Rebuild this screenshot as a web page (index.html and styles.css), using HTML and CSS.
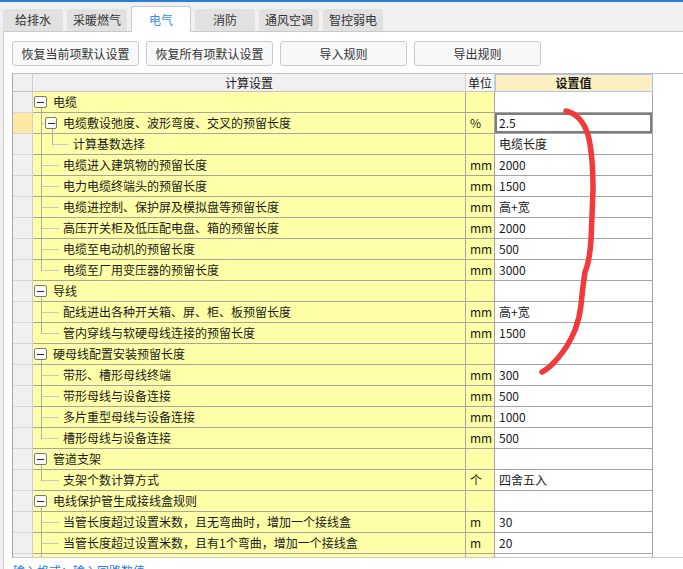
FILE: index.html
```html
<!DOCTYPE html>
<html lang="zh-CN">
<head>
<meta charset="utf-8">
<title>计算设置</title>
<link rel="stylesheet" href="styles.css">
</head>
<body>
<div class="topbar"></div>
<div class="tabs">
  <div class="tab">给排水</div>
  <div class="tab">采暖燃气</div>
  <div class="tab active">电气</div>
  <div class="tab">消防</div>
  <div class="tab">通风空调</div>
  <div class="tab">智控弱电</div>
</div>
<div class="panel">
  <div class="toolbar">
    <button class="btn">恢复当前项默认设置</button>
    <button class="btn">恢复所有项默认设置</button>
    <button class="btn">导入规则</button>
    <button class="btn">导出规则</button>
  </div>
  <div class="grid">
    <div class="row head"><div class="rh"></div><div class="name">计算设置</div><div class="unit">单位</div><div class="val">设置值</div></div>

    <div class="row"><div class="rh"></div><div class="name g1"><span class="box b1"></span><span class="txt x1">电缆</span></div><div class="unit"></div><div class="val"></div></div>
    <div class="row"><div class="rh sel"></div><div class="name g2"><span class="seg t"></span><span class="box b2"></span><span class="txt x2">电缆敷设弛度、波形弯度、交叉的预留长度</span></div><div class="unit">%</div><div class="val cur">2.5</div></div>
    <div class="row"><div class="rh"></div><div class="name"><span class="seg v"></span><span class="seg l w24"></span><span class="txt x3">计算基数选择</span></div><div class="unit"></div><div class="val">电缆长度</div></div>
    <div class="row"><div class="rh"></div><div class="name"><span class="seg t w26"></span><span class="txt x4">电缆进入建筑物的预留长度</span></div><div class="unit">mm</div><div class="val">2000</div></div>
    <div class="row"><div class="rh"></div><div class="name"><span class="seg t w26"></span><span class="txt x4">电力电缆终端头的预留长度</span></div><div class="unit">mm</div><div class="val">1500</div></div>
    <div class="row"><div class="rh"></div><div class="name"><span class="seg t w26"></span><span class="txt x4">电缆进控制、保护屏及模拟盘等预留长度</span></div><div class="unit">mm</div><div class="val">高+宽</div></div>
    <div class="row"><div class="rh"></div><div class="name"><span class="seg t w26"></span><span class="txt x4">高压开关柜及低压配电盘、箱的预留长度</span></div><div class="unit">mm</div><div class="val">2000</div></div>
    <div class="row"><div class="rh"></div><div class="name"><span class="seg t w26"></span><span class="txt x4">电缆至电动机的预留长度</span></div><div class="unit">mm</div><div class="val">500</div></div>
    <div class="row"><div class="rh"></div><div class="name"><span class="seg l w26"></span><span class="txt x4">电缆至厂用变压器的预留长度</span></div><div class="unit">mm</div><div class="val">3000</div></div>

    <div class="row"><div class="rh"></div><div class="name g1"><span class="box b1"></span><span class="txt x1">导线</span></div><div class="unit"></div><div class="val"></div></div>
    <div class="row"><div class="rh"></div><div class="name"><span class="seg t w26"></span><span class="txt x4">配线进出各种开关箱、屏、柜、板预留长度</span></div><div class="unit">mm</div><div class="val">高+宽</div></div>
    <div class="row"><div class="rh"></div><div class="name"><span class="seg l w26"></span><span class="txt x4">管内穿线与软硬母线连接的预留长度</span></div><div class="unit">mm</div><div class="val">1500</div></div>

    <div class="row"><div class="rh"></div><div class="name g1"><span class="box b1"></span><span class="txt x1">硬母线配置安装预留长度</span></div><div class="unit"></div><div class="val"></div></div>
    <div class="row"><div class="rh"></div><div class="name"><span class="seg t w26"></span><span class="txt x4">带形、槽形母线终端</span></div><div class="unit">mm</div><div class="val">300</div></div>
    <div class="row"><div class="rh"></div><div class="name"><span class="seg t w26"></span><span class="txt x4">带形母线与设备连接</span></div><div class="unit">mm</div><div class="val">500</div></div>
    <div class="row"><div class="rh"></div><div class="name"><span class="seg t w26"></span><span class="txt x4">多片重型母线与设备连接</span></div><div class="unit">mm</div><div class="val">1000</div></div>
    <div class="row"><div class="rh"></div><div class="name"><span class="seg l w26"></span><span class="txt x4">槽形母线与设备连接</span></div><div class="unit">mm</div><div class="val">500</div></div>

    <div class="row"><div class="rh"></div><div class="name g1"><span class="box b1"></span><span class="txt x1">管道支架</span></div><div class="unit"></div><div class="val"></div></div>
    <div class="row"><div class="rh"></div><div class="name"><span class="seg l w26"></span><span class="txt x4">支架个数计算方式</span></div><div class="unit">个</div><div class="val">四舍五入</div></div>

    <div class="row"><div class="rh"></div><div class="name g1"><span class="box b1"></span><span class="txt x1">电线保护管生成接线盒规则</span></div><div class="unit"></div><div class="val"></div></div>
    <div class="row"><div class="rh"></div><div class="name"><span class="seg t w26"></span><span class="txt x4">当管长度超过设置米数，且无弯曲时，增加一个接线盒</span></div><div class="unit">m</div><div class="val">30</div></div>
    <div class="row"><div class="rh"></div><div class="name"><span class="seg t w26"></span><span class="txt x4">当管长度超过设置米数，且有1个弯曲，增加一个接线盒</span></div><div class="unit">m</div><div class="val">20</div></div>
    <div class="row"><div class="rh"></div><div class="name"><span class="seg t w26"></span><span class="txt x4">当管长度超过设置米数，且有2个弯曲，增加一个接线盒</span></div><div class="unit">m</div><div class="val">15</div></div>
  </div>
  <div class="hint">输入格式：输入回路数值</div>
</div>
<svg class="scribble" width="683" height="569" viewBox="0 0 683 569">
  <path d="M566,111 C576,113 584,122 588,135 C592,150 593,170 593,190 L591,240 C590,255 588,265 585,272 C583,285 582,295 581,305 C580,315 578,322 575,330 C570,342 565,350 558,358 C553,364 548,369 542,372" fill="none" stroke="#f23a3a" stroke-width="5.5" stroke-linecap="round" stroke-linejoin="round"/>
</svg>
</body>
</html>
```

FILE: styles.css
```css
* { box-sizing: border-box; }

body {
  margin: 0;
  width: 683px;
  height: 569px;
  overflow: hidden;
  position: relative;
  background: #f0f0f0;
  font-family: "Noto Sans CJK SC", "Noto Sans", sans-serif;
  font-size: 12px;
  color: #1a1a1a;
}

.topbar {
  height: 2px;
  background: #2c7cd4;
}

.tabs {
  display: flex;
  align-items: flex-end;
  gap: 4px;
  height: 29px;
  padding-left: 3px;
}

.tab {
  width: 60px;
  height: 22px;
  background: #e1e1e1;
  border-radius: 3px 3px 0 0;
  display: flex;
  align-items: center;
  justify-content: center;
  color: #333;
  line-height: 1;
}

.tab.active {
  height: 26px;
  background: #fff;
  border: 1px solid #c9c9c9;
  border-bottom: none;
  color: #3b8de6;
  margin-bottom: -1px;
  position: relative;
}

.panel {
  margin-left: 3px;
  height: 538px;
  overflow: hidden;
  background: #fff;
  border-top: 1px solid #c9c9c9;
  border-left: 1px solid #c9c9c9;
  padding-top: 9px;
}

.toolbar {
  display: flex;
  gap: 7px;
  margin-left: 8px;
}

.btn {
  width: 127px;
  height: 25px;
  padding: 0;
  border: 1px solid #c5cbd5;
  border-radius: 3px;
  background: #f8f8f8;
  font: inherit;
  color: #333;
}

.grid {
  margin: 7px 0 0 8px;
  height: 485px;
  overflow: hidden;
  background: #fff;
  border-top: 1px solid #bdbdbd;
  border-left: 1px solid #a9a9a9;
  border-bottom: 1px solid #cacaca;
}

.row {
  display: flex;
  height: 21px;
}

.row > div {
  flex: none;
  display: flex;
  align-items: center;
  border-bottom: 1px solid #a5a5a5;
  line-height: 16px;
  white-space: nowrap;
}

.row > .rh {
  width: 20px;
  background: #f0f0f0;
  border-right: 1px solid #c9ced8;
  border-bottom-color: #d3d8e0;
}

.row > .rh.sel {
  background: #ffe8a6;
}

.row > .name {
  width: 433px;
  background: #ffffa8;
  border-right: 1px solid #a5a5a5;
}

.row > .unit {
  width: 29px;
  background: #ffffa8;
  border-right: 1px solid #a5a5a5;
  padding-left: 4px;
}

.row > .val {
  width: 158px;
  background: #fff;
  border-right: 1px solid #a5a5a5;
  padding-left: 4px;
}

.row > .val.cur {
  box-shadow: inset 0 0 0 2px #7d7d7d;
}

/* header */
.row.head {
  height: 18px;
}

.row.head > div {
  border-bottom-color: #c4c4c4;
}

.row.head > .name {
  background: #f0f0f0;
  justify-content: center;
  border-right-color: #d0d0d0;
}

.row.head > .unit {
  background: #f7f7f7;
  justify-content: center;
  padding-left: 0;
  border-right-color: #d0d0d0;
}

.row.head > .val {
  background: #fdefc1;
  justify-content: center;
  padding-left: 0;
  font-weight: bold;
  border-right-color: #a9c9ec;
  border-bottom-color: #a9c9ec;
  box-shadow: inset 1px 1px 0 #a9c9ec;
}

/* tree */
.name.g1 {
  background: linear-gradient(#acacac, #acacac) 8px 100% / 1px 50% no-repeat, #ffffa8;
}

.name.g2 {
  background: linear-gradient(#acacac, #acacac) 19px 100% / 1px 50% no-repeat, #ffffa8;
}

.seg {
  flex: none;
  align-self: stretch;
  width: 11px;
}

.seg.w24 { width: 24px; }
.seg.w26 { width: 26px; }

.seg.v {
  background: linear-gradient(#acacac, #acacac) 8px 0 / 1px 100% no-repeat;
}

.seg.t {
  background:
    linear-gradient(#acacac, #acacac) 8px 0 / 1px 100% no-repeat,
    linear-gradient(#c8c8c8, #c8c8c8) 9px 10px / 100% 1px no-repeat;
}

.seg.l {
  background:
    linear-gradient(#acacac, #acacac) 8px 0 / 1px 11px no-repeat,
    linear-gradient(#c8c8c8, #c8c8c8) 9px 10px / 100% 1px no-repeat;
}

.box {
  flex: none;
  width: 13px;
  height: 12px;
  background: #fff;
  border: 1px solid #7a7a7a;
  border-radius: 2px;
  display: flex;
  align-items: center;
  justify-content: center;
}

.box::before {
  content: "";
  width: 7px;
  height: 1px;
  background: #2a2a2a;
}

.b1 { margin-left: 1px; }
.b2 { margin-left: 1px; width: 12px; }

.x1 { margin-left: 6px; }
.x2 { margin-left: 6px; }
.x3 { margin-left: 5px; }
.x4 { margin-left: 4px; }

.hint {
  margin: 5px 0 0 9px;
  color: #2a7fe0;
  line-height: 16px;
}

.scribble {
  position: absolute;
  left: 0;
  top: 0;
  pointer-events: none;
}
```
